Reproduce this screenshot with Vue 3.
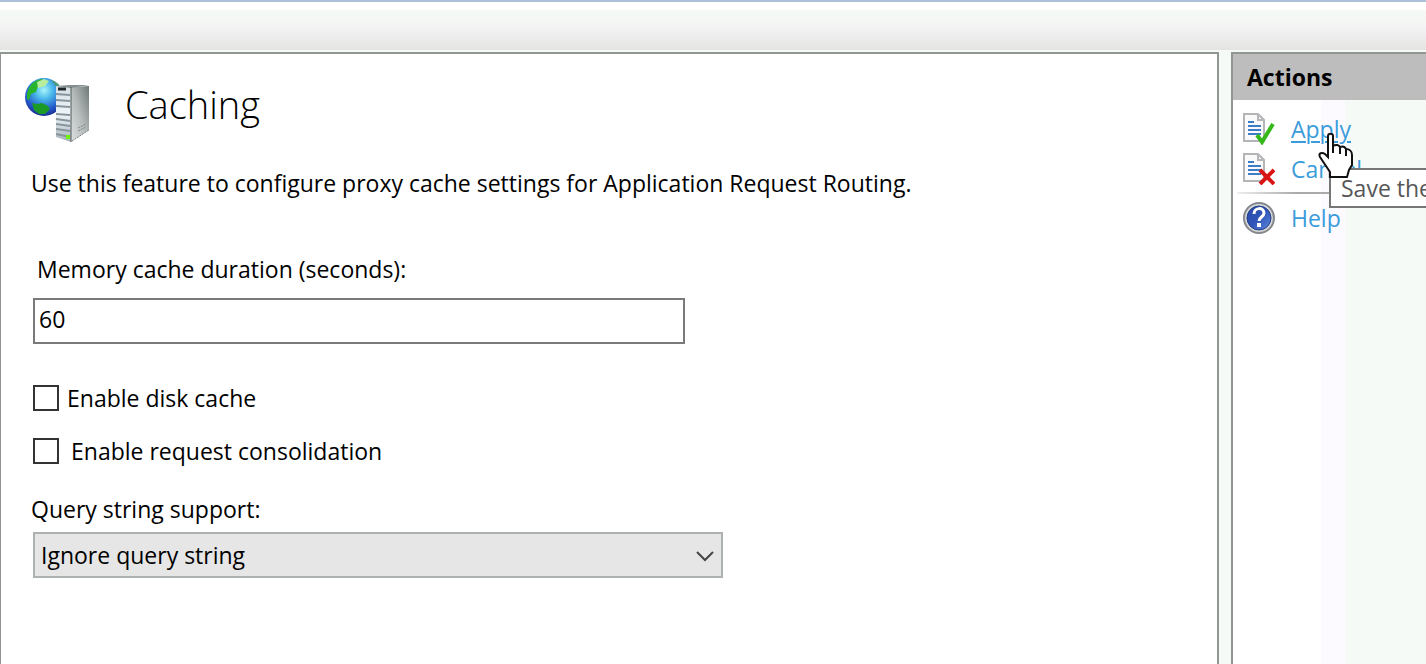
<script setup>
import { ref } from "vue";

const duration = ref("60");
const diskCache = ref(false);
const consolidation = ref(false);
const queryString = ref("ignore");
</script>
<template>
  <div class="page">
    <header class="toolbar"></header>

    <div class="workspace">
      <main class="feature">
        <div class="feature-header">
          <!-- Globe with server -->
          <svg class="feature-icon" viewBox="0 0 66 64" aria-hidden="true">
            <defs>
              <radialGradient id="globe" cx="0.5" cy="0.32" r="0.68">
                <stop offset="0" stop-color="#a8f4fa" />
                <stop offset="0.35" stop-color="#49b7ea" />
                <stop offset="0.75" stop-color="#2459c9" />
                <stop offset="1" stop-color="#1a2f91" />
              </radialGradient>
              <linearGradient id="side" x1="0" y1="1" x2="1" y2="0">
                <stop offset="0" stop-color="#e0e2e2" />
                <stop offset="0.5" stop-color="#b4baba" />
                <stop offset="1" stop-color="#6f7878" />
              </linearGradient>
              <linearGradient id="front" x1="0" y1="0" x2="0" y2="1">
                <stop offset="0" stop-color="#d5dfe3" />
                <stop offset="0.5" stop-color="#eef6fa" />
                <stop offset="1" stop-color="#a4b0b8" />
              </linearGradient>
            </defs>
            <circle cx="19" cy="19" r="19" fill="url(#globe)" />
            <path
              d="M2 21C1 10 8 2 17 1l1 4-5 3-2 6-5 2-2 6z"
              fill="#28b52c"
            />
            <path d="M12 4l7-3 5 2-4 5-7 2z" fill="#b8ed9d" />
            <path d="M26 2c6 2 9 5 10 9l-5-3z" fill="#4b9c72" />
            <path d="M7 25l5 1 5-1 6 3 2 3-5 5-6 0-5-4z" fill="#1c9a28" />
            <path d="M31 8h15v56l-15-5z" fill="url(#front)" />
            <path d="M46 9l18-1v44L46 64z" fill="url(#side)" />
            <path d="M31 8l14-1 19 0-18 3z" fill="#858e8e" />
            <path d="M33 11h8" stroke="#20272a" stroke-width="3" />
            <path
              d="M31 16l14 1M31 22l14 1M31 28l14 1M31 36l14 1M31 41l14 2M31 46l14 2M31 51l14 2M31 56l14 3"
              stroke="#87949c"
              stroke-width="2"
            />
            <path d="M46 9v55" stroke="#4f5757" stroke-width="1" />
            <path
              d="M47 63l17-11M53 50l8-4M53 53l8-4"
              stroke="#7b8383"
              stroke-width="1"
              stroke-dasharray="2 1"
            />
            <rect x="41" y="57" width="4" height="4" fill="#6df20c" />
          </svg>
          <h1>Caching</h1>
        </div>

        <p class="description">
          Use this feature to configure proxy cache settings for Application
          Request Routing.
        </p>

        <form class="settings" @submit.prevent>
          <label class="duration-label" for="duration">
            Memory cache duration (seconds):
          </label>
          <input id="duration" v-model="duration" class="text-box" type="text" />

          <label class="check check--disk">
            <input v-model="diskCache" type="checkbox" />
            <span>Enable disk cache</span>
          </label>
          <label class="check check--request">
            <input v-model="consolidation" type="checkbox" />
            <span>Enable request consolidation</span>
          </label>

          <label class="query-label" for="query">Query string support:</label>
          <div class="select-wrapper">
            <select id="query" v-model="queryString">
              <option value="ignore">Ignore query string</option>
            </select>
            <svg class="chevron" viewBox="0 0 18 12" aria-hidden="true">
              <path d="M1 2l8 8 8-8" />
            </svg>
          </div>
        </form>
      </main>

      <aside class="actions">
        <h2>Actions</h2>
        <ul>
          <li class="action">
            <svg class="action-icon" viewBox="0 0 32 32" aria-hidden="true">
              <path class="sheet" d="M1 1h14l6 6v21H1z" />
              <path class="fold" d="M15 1v6h6" />
              <path class="lines" d="M5 9h6M5 13h13M5 17h13M5 21h13" />
              <path
                d="M14 22l5 7L30 11"
                fill="none"
                stroke="#35b81a"
                stroke-width="4"
              />
            </svg>
            <a class="link link--hover" href="#apply">Apply</a>
            <div class="tooltip" role="tooltip">Save the</div>
            <!-- Hand pointer over the link -->
            <svg class="pointer" viewBox="0 0 36 46" aria-hidden="true">
              <path
                d="M10 3c0-3 5-3 5 0v10c3-2 6-1 7 1 3-1 5 0 6 2 3 0 6 2 6 6v10l-3 5-2 7H12v-5l-4-6-6-9c-2-4 2-5 5-3l3 3z"
                fill="#fff"
                stroke="#111"
                stroke-width="2"
              />
              <path
                d="M15 11v9M22 14v7M28 16v7"
                fill="none"
                stroke="#111"
                stroke-width="2"
              />
            </svg>
          </li>
          <li class="action">
            <svg class="action-icon" viewBox="0 0 32 32" aria-hidden="true">
              <path class="sheet" d="M1 1h14l6 6v21H1z" />
              <path class="fold" d="M15 1v6h6" />
              <path class="lines" d="M5 9h6M5 13h13M5 17h13M5 21h13" />
              <path
                d="M17 17l14 14M31 17L17 31"
                fill="none"
                stroke="#d91414"
                stroke-width="4"
              />
            </svg>
            <a class="link" href="#cancel">Cancel</a>
          </li>
          <li class="divider" role="separator"></li>
          <li class="action">
            <svg class="action-icon" viewBox="0 0 32 32" aria-hidden="true">
              <defs>
                <linearGradient id="help" x1="0" y1="0" x2="1" y2="1">
                  <stop offset="0" stop-color="#2549aa" />
                  <stop offset="0.5" stop-color="#2f55b8" />
                  <stop offset="1" stop-color="#5f8be0" />
                </linearGradient>
              </defs>
              <circle cx="16" cy="16" r="15" fill="#d5d7da" stroke="#85888c" stroke-width="2" />
              <circle cx="16" cy="16" r="12" fill="url(#help)" stroke="#273f83" />
              <path
                d="M11 12c0-7 10-7 10-1 0 4-5 4-5 8"
                fill="none"
                stroke="#fff"
                stroke-width="3"
              />
              <rect x="14" y="21" width="4" height="4" fill="#fff" />
            </svg>
            <a class="link" href="#help">Help</a>
          </li>
        </ul>
      </aside>
    </div>
  </div>
</template>
<style>
body {
  margin: 0;
  overflow-x: hidden;
}
</style>
<style scoped>
.page {
  display: flex;
  flex-direction: column;
  min-height: 100vh;
  overflow: hidden;
  background: #f5faf7;
  color: #000;
  font-family: "Open Sans", "Noto Sans", sans-serif;
  font-size: 23px;
  line-height: 32px;
}

.page * {
  box-sizing: border-box;
}

.toolbar {
  height: 50px;
  margin-bottom: 2px;
  border-top: 2px solid #adc0d8;
  background: linear-gradient(#fff 8px, #f5faf6 8px, #f4f6f4 22px, #ededed 34px, #e4e5e2);
}

.workspace {
  display: flex;
  flex: 1;
  gap: 12px;
}

.feature {
  flex: 1;
  min-width: 0;
  padding: 24px 30px;
  border: 2px solid #929692;
  border-left-width: 1px;
  border-bottom: 0;
  background: #fff;
}

.feature-header {
  display: flex;
  align-items: flex-start;
  gap: 34px;
  height: 64px;
  margin-left: -6px;
}

.feature-icon {
  width: 66px;
  height: 64px;
}

h1 {
  margin: 0;
  font-size: 38px;
  font-weight: 300;
  line-height: 52px;
}

.description {
  margin: 25px 0 0;
}

.settings {
  display: flex;
  flex-direction: column;
  align-items: flex-start;
  margin-top: 54px;
}

.duration-label {
  margin-left: 6px;
}

.text-box {
  width: 100%;
  max-width: 652px;
  height: 46px;
  margin: 13px 0 0 2px;
  padding: 0 4px 4px;
  border: 2px solid #7a7a7a;
  border-radius: 0;
  background: #fff;
  font: inherit;
}

.check {
  display: flex;
  align-items: center;
  margin-left: 2px;
}

.check--disk {
  gap: 8px;
  margin-top: 38px;
}

.check--request {
  gap: 12px;
  margin-top: 21px;
}

.check input {
  appearance: none;
  width: 26px;
  height: 26px;
  margin: 0;
  border: 2px solid #333;
  background: #fff;
}

.check input:checked {
  background: #333;
}

.query-label {
  margin-top: 26px;
}

.select-wrapper {
  position: relative;
  width: 100%;
  max-width: 690px;
  margin: 7px 0 0 2px;
}

select {
  appearance: none;
  width: 100%;
  height: 46px;
  padding: 0 40px 0 6px;
  border: 2px solid #adb2b0;
  border-radius: 0;
  background: #e6e6e6;
  color: #000;
  font: inherit;
}

.chevron {
  position: absolute;
  top: 18px;
  right: 9px;
  width: 18px;
  height: 12px;
  fill: none;
  stroke: #444;
  stroke-width: 2;
  pointer-events: none;
}

.actions {
  width: 195px;
  border-top: 2px solid #929692;
  border-left: 2px solid #929692;
  background: linear-gradient(90deg, #fff 88px, #fdfaff 88px, #fdfaff 112px, #f5faf7 112px);
}

h2 {
  margin: 0;
  padding: 0 14px;
  background: #bdbdbd;
  font-size: 23px;
  font-weight: 700;
  line-height: 46px;
}

ul {
  margin: 0;
  padding: 9px 0 0 10px;
  list-style: none;
}

.action {
  position: relative;
  display: flex;
  align-items: center;
  gap: 16px;
  height: 40px;
}

.action-icon {
  flex: none;
  width: 32px;
  height: 32px;
}

.sheet {
  fill: #fafafa;
  stroke: #b4b5b7;
  stroke-width: 2;
}

.fold {
  fill: none;
  stroke: #b4b5b7;
  stroke-width: 2;
}

.lines {
  stroke: #3c7ec6;
  stroke-width: 2;
}

.link {
  color: #3b9cdb;
  text-decoration: none;
}

.link--hover {
  text-decoration: underline;
  text-decoration-thickness: 2px;
  text-underline-offset: 3px;
}

.divider {
  height: 2px;
  margin: 3px 0 4px -6px;
  background: linear-gradient(90deg, #eee, #aaa 60px, #aaa);
}

.tooltip {
  position: absolute;
  z-index: 1;
  top: 59px;
  left: 86px;
  height: 40px;
  padding: 2px 10px;
  border: 2px solid #767676;
  border-right: 0;
  background: #fff;
  color: #575757;
  white-space: nowrap;
}

.pointer {
  position: absolute;
  z-index: 2;
  top: 24px;
  left: 75px;
  width: 36px;
  height: 46px;
}
</style>
